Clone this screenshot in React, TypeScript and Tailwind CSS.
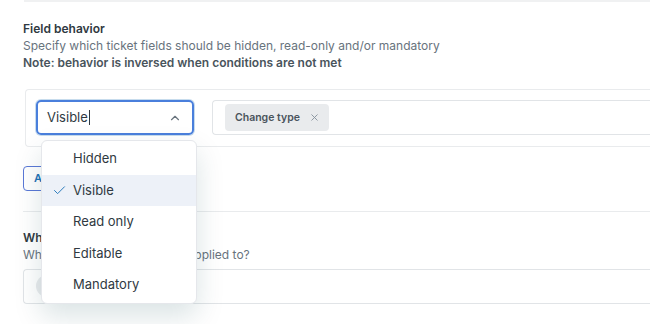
import { FiCheck, FiChevronUp, FiX } from "react-icons/fi";

const options = ["Hidden", "Visible", "Read only", "Editable", "Mandatory"];

function Dropdown() {
  return (
    <div className="absolute left-[5px] top-[40px] z-10 w-[156px] rounded-md border border-gray-200 bg-white py-[2px] shadow-[0_12px_28px_rgba(4,68,77,0.15)]">
      {options.map((o) => (
        <div
          key={o}
          className={`flex h-[31.5px] items-center ${o === "Visible" ? "bg-[#edf1f8]" : ""}`}
        >
          <span className="flex w-[31px] justify-end pr-[6px]">
            {o === "Visible" && <FiCheck className="h-[15px] w-[15px] stroke-[1.5] text-[#1f73b7]" />}
          </span>
          <span className="text-[13px] text-[#2f3941]">{o}</span>
        </div>
      ))}
    </div>
  );
}

export default function App() {
  return (
    <div className="h-[324px] w-[650px] overflow-hidden bg-white font-['Inter',sans-serif] text-[#2f3941]">
      <div className="ml-[24px] h-[2px] bg-[#f0f1f2]" />

      <div className="pl-[23px] pt-[18px]">
        <p className="text-[12px] font-semibold leading-[17px] text-[#2f3941]">Field behavior</p>
        <p className="text-[12px] leading-[17px] text-[#68737d]">
          Specify which ticket fields should be hidden, read-only and/or mandatory
        </p>
        <p className="text-[12px] font-semibold leading-[17px] text-[#49545c]">
          Note: behavior is inversed when conditions are not met
        </p>
      </div>

      <div className="ml-[25px] mt-[18px] flex h-[58px] items-start gap-[18px] rounded-l-[4px] border border-r-0 border-[#e9ebed] pl-[10px] pt-[10px]">
        <div className="relative">
          <div className="flex h-[35px] w-[158px] items-center justify-between rounded-[5px] border-2 border-[#4a7fdc] pl-[9px] pr-[10px] shadow-[0_0_0_1px_rgba(31,115,183,0.25)]">
            <span className="flex items-center text-[13px] text-[#2f3941]">
              Visible
              <span className="ml-[1px] inline-block h-[15px] w-[1px] bg-[#2f3941]" />
            </span>
            <FiChevronUp className="h-[14px] w-[14px] text-[#68737d]" />
          </div>
          <Dropdown />
        </div>
        <div className="flex h-[35px] flex-1 items-center rounded-l-[4px] border border-r-0 border-[#e1e4e7] pl-[12px]">
          <span className="flex h-[27px] items-center gap-[9px] rounded-[4px] bg-[#e9ebed] pl-[10px] pr-[9px] text-[10.5px] font-semibold text-[#49545c]">
            Change type
            <FiX className="h-[11px] w-[11px] text-[#87929d]" />
          </span>
        </div>
      </div>

      <div className="pl-[23px] pt-[17px]">
        <button className="h-[25px] rounded-[4px] border border-[#5a78d6] px-[10px] text-[11px] font-semibold text-[#1f73b7]">
          Add behavior
        </button>
      </div>

      <div className="ml-[23px] mt-[20px] h-px bg-[#e9ebed]" />

      <div className="pl-[23px] pt-[17px]">
        <p className="text-[12px] font-semibold leading-[17px] text-[#2f3941]">Which brands</p>
        <p className="text-[12px] leading-[17px] text-[#68737d]">
          Which brands should this be applied to?
        </p>
        <div className="mt-[6px] flex h-[35px] items-center rounded-l-[4px] border border-r-0 border-[#e1e4e7] pl-[12px]">
          <span className="h-[22px] w-[60px] rounded-full bg-[#e9ebed]" />
        </div>
      </div>
    </div>
  );
}
